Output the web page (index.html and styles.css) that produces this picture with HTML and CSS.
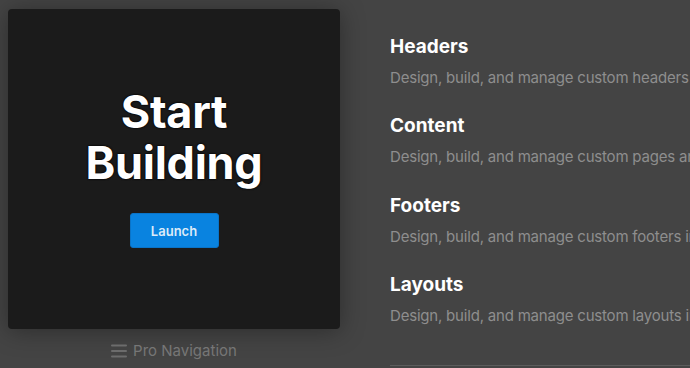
FILE: index.html
```html
<!DOCTYPE html>
<html lang="en">
<head>
  <meta charset="UTF-8">
  <title>Pro Navigation</title>
  <link rel="stylesheet" href="styles.css">
</head>
<body>
  <div class="preview">
    <div class="card">
      <h1 class="card-title">Start<br>Building</h1>
      <button class="launch">Launch</button>
    </div>
    <div class="caption">
      <svg class="menu-icon" width="16" height="14" viewBox="0 0 16 14">
        <rect x="0" y="0.5" width="16" height="2" rx="1"/>
        <rect x="0" y="6" width="16" height="2" rx="1"/>
        <rect x="0" y="11.5" width="16" height="2" rx="1"/>
      </svg>
      <span>Pro Navigation</span>
    </div>
  </div>

  <ul class="sections">
    <li class="section">
      <h2>Headers</h2>
      <p>Design, build, and manage custom headers in one place.</p>
    </li>
    <li class="section">
      <h2>Content</h2>
      <p>Design, build, and manage custom pages and posts.</p>
    </li>
    <li class="section">
      <h2>Footers</h2>
      <p>Design, build, and manage custom footers in one place.</p>
    </li>
    <li class="section">
      <h2>Layouts</h2>
      <p>Design, build, and manage custom layouts in one place.</p>
    </li>
  </ul>
</body>
</html>
```

FILE: styles.css
```css
/* Dark dashboard */
body {
  margin: 0;
  height: 368px;
  overflow: hidden;
  display: flex;
  background: #444444;
  font-family: Inter, "Noto Sans", sans-serif;
}

.preview {
  flex: none;
  width: 332px;
  padding: 9px 0 0 8px;
}

.card {
  height: 320px;
  background: #1b1b1b;
  border-radius: 4px;
  box-shadow: 0 2px 24px rgba(0, 0, 0, 0.35);
  display: flex;
  flex-direction: column;
  align-items: center;
  justify-content: center;
}

.card-title {
  margin: 3px 0 0;
  color: #fff;
  font-size: 45px;
  font-weight: 700;
  line-height: 51px;
  letter-spacing: -0.3px;
  text-align: center;
  text-shadow: 0 0 2px #000, 0 0 2px #000;
}

.launch {
  margin: 25px 0 7px;
  width: 89px;
  height: 35px;
  border: 1px solid #0a74c8;
  border-radius: 3px;
  background: #0983e0;
  color: #dcebf8;
  font-family: inherit;
  font-size: 13px;
  font-weight: 600;
}

.caption {
  display: flex;
  align-items: center;
  justify-content: center;
  gap: 6px;
  margin-top: 12px;
  color: #767676;
  font-size: 15px;
}

.menu-icon {
  fill: #6c6c6c;
}

.sections {
  flex: 1;
  margin: 0 0 0 50px;
  padding: 0;
  list-style: none;
  border-bottom: 1px solid #5c5c5c;
  height: 366px;
  box-sizing: border-box;
  padding-top: 35px;
  white-space: nowrap;
  overflow: hidden;
}

.section {
  height: 79.3px;
}

.section h2 {
  margin: 0;
  color: #fff;
  font-size: 19px;
  font-weight: 700;
  line-height: 23px;
}

.section p {
  margin: 11px 0 0;
  color: #8e8e8e;
  font-size: 15px;
  line-height: 18px;
  letter-spacing: -0.2px;
}
```
